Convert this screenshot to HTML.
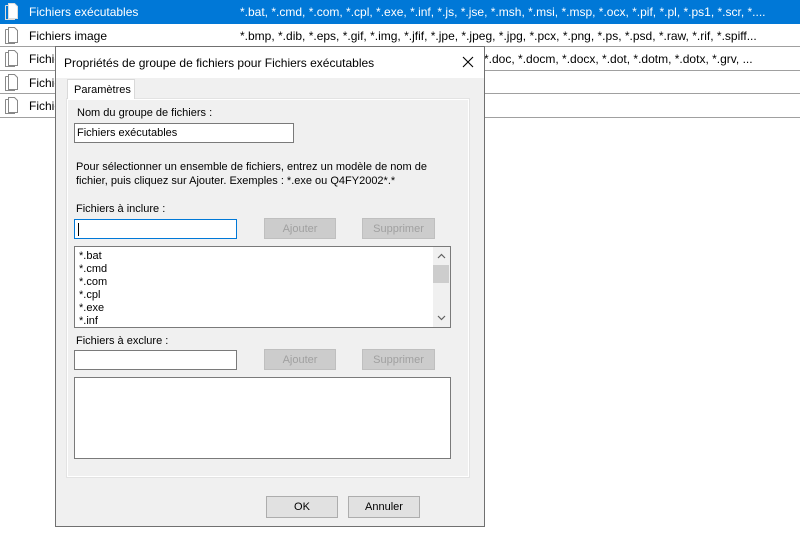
<!DOCTYPE html>
<html><head><meta charset="utf-8"><style>
*{margin:0;padding:0;box-sizing:border-box}
body{width:800px;height:543px;background:#fff;position:relative;overflow:hidden;font-family:"Liberation Sans",sans-serif;}
.a{position:absolute}
.row{position:absolute;left:0;width:800px;height:24px;border-bottom:1px solid #a0a0a0;font-size:12px;line-height:24px;color:#000}
.row .n{position:absolute;left:29px}
.row .e{position:absolute;left:240px;white-space:nowrap}
.ic{position:absolute;left:4px;top:3px;width:14px;height:17px}
.d{font-size:11px;color:#000}
.tb{position:absolute;background:#fff;border:1px solid #7a7a7a}
.btn{position:absolute;background:#cccccc;border:1px solid #bfbfbf;color:#a0a0a0;font-size:11px;text-align:center;line-height:21px}
.ok{position:absolute;background:#e1e1e1;border:1px solid #adadad;font-size:11px;text-align:center;line-height:21px;color:#000}
</style></head><body>
<div class="row" style="top:0;background:#0078d7;color:#fff;border-bottom:1px solid #0078d7"><svg class="ic" viewBox="0 0 14 17"><path d="M4.5 .5h6l3 3v12h-9z" fill="#fff" stroke="#ddd"/><path d="M1.5 2.5h3M1.5 2.5v14h9v-1" fill="none" stroke="#ddd"/></svg><span class="n">Fichiers exécutables</span><span class="e">*.bat, *.cmd, *.com, *.cpl, *.exe, *.inf, *.js, *.jse, *.msh, *.msi, *.msp, *.ocx, *.pif, *.pl, *.ps1, *.scr, *....</span></div>
<div class="row" style="top:24px;height:23px"><svg class="ic" viewBox="0 0 14 17"><path d="M4.5 .5h6l3 3v12h-9z" fill="#fff" stroke="#888"/><path d="M1.5 2.5h3M1.5 2.5v14h9v-1" fill="none" stroke="#888"/></svg><span class="n">Fichiers image</span><span class="e">*.bmp, *.dib, *.eps, *.gif, *.img, *.jfif, *.jpe, *.jpeg, *.jpg, *.pcx, *.png, *.ps, *.psd, *.raw, *.rif, *.spiff...</span></div>
<div class="row" style="top:47px"><svg class="ic" viewBox="0 0 14 17"><path d="M4.5 .5h6l3 3v12h-9z" fill="#fff" stroke="#888"/><path d="M1.5 2.5h3M1.5 2.5v14h9v-1" fill="none" stroke="#888"/></svg><span class="n">Fichiers</span><span class="e" style="left:484px">*.doc, *.docm, *.docx, *.dot, *.dotm, *.dotx, *.grv, ...</span></div>
<div class="row" style="top:71px;height:23px"><svg class="ic" viewBox="0 0 14 17"><path d="M4.5 .5h6l3 3v12h-9z" fill="#fff" stroke="#888"/><path d="M1.5 2.5h3M1.5 2.5v14h9v-1" fill="none" stroke="#888"/></svg><span class="n">Fichiers</span></div>
<div class="row" style="top:94px"><svg class="ic" viewBox="0 0 14 17"><path d="M4.5 .5h6l3 3v12h-9z" fill="#fff" stroke="#888"/><path d="M1.5 2.5h3M1.5 2.5v14h9v-1" fill="none" stroke="#888"/></svg><span class="n">Fichiers</span></div>

<div class="a" style="left:55px;top:46px;width:430px;height:481px;border:1px solid #707070;background:#f0f0f0">
 <div class="a" style="left:0;top:0;width:428px;height:31px;background:#fff;font-size:12px;line-height:32px;padding-left:8px">Propriétés de groupe de fichiers pour Fichiers exécutables</div>
 <svg class="a" style="left:406px;top:9px" width="12" height="12" viewBox="0 0 12 12"><path d="M1 1L11 11M11 1L1 11" stroke="#000" stroke-width="1.1"/></svg>
</div>
<div class="a" style="left:67px;top:79px;width:68px;height:20px;background:#fff;border:1px solid #d9d9d9;border-bottom:none;font-size:11px;line-height:20px;padding-left:6px;z-index:2">Paramètres</div>
<div class="a" style="left:66px;top:98px;width:404px;height:380px;background:#fff;border:1px solid #e3e3e3"></div>
<div class="a" style="left:68px;top:100px;width:400px;height:376px;background:#f0f0f0"></div>

<div class="a d" style="left:77px;top:107px">Nom du groupe de fichiers :</div>
<div class="tb d" style="left:74px;top:123px;width:220px;height:20px;line-height:18px;padding-left:2px">Fichiers exécutables</div>
<div class="a d" style="left:76px;top:160px;line-height:14px;width:380px">Pour sélectionner un ensemble de fichiers, entrez un modèle de nom de fichier, puis cliquez sur Ajouter. Exemples : *.exe ou Q4FY2002*.*</div>
<div class="a d" style="left:76px;top:203px">Fichiers à inclure :</div>
<div class="tb" style="left:74px;top:219px;width:163px;height:20px;border-color:#0078d7"><div class="a" style="left:3px;top:3px;width:1px;height:13px;background:#000"></div></div>
<div class="btn" style="left:264px;top:218px;width:72px;height:21px">Ajouter</div>
<div class="btn" style="left:362px;top:218px;width:73px;height:21px">Supprimer</div>
<div class="tb d" style="left:74px;top:246px;width:377px;height:82px;line-height:13px;padding:3px 0 0 4px">*.bat<br>*.cmd<br>*.com<br>*.cpl<br>*.exe<br>*.inf
 <div class="a" style="left:358px;top:0;width:17px;height:80px;background:#f0f0f0"></div>
 <div class="a" style="left:358px;top:18px;width:16px;height:18px;background:#cdcdcd"></div>
 <svg class="a" style="left:362px;top:6px" width="9" height="6"><path d="M1 5L4.5 1.5L8 5" fill="none" stroke="#606060" stroke-width="1.2"/></svg>
 <svg class="a" style="left:362px;top:68px" width="9" height="6"><path d="M1 1L4.5 4.5L8 1" fill="none" stroke="#606060" stroke-width="1.2"/></svg>
</div>
<div class="a d" style="left:76px;top:335px">Fichiers à exclure :</div>
<div class="tb" style="left:74px;top:350px;width:163px;height:20px"></div>
<div class="btn" style="left:264px;top:349px;width:72px;height:21px">Ajouter</div>
<div class="btn" style="left:362px;top:349px;width:73px;height:21px">Supprimer</div>
<div class="tb" style="left:74px;top:377px;width:377px;height:82px"></div>
<div class="ok" style="left:266px;top:496px;width:72px;height:22px">OK</div>
<div class="ok" style="left:348px;top:496px;width:72px;height:22px">Annuler</div>
</body></html>
